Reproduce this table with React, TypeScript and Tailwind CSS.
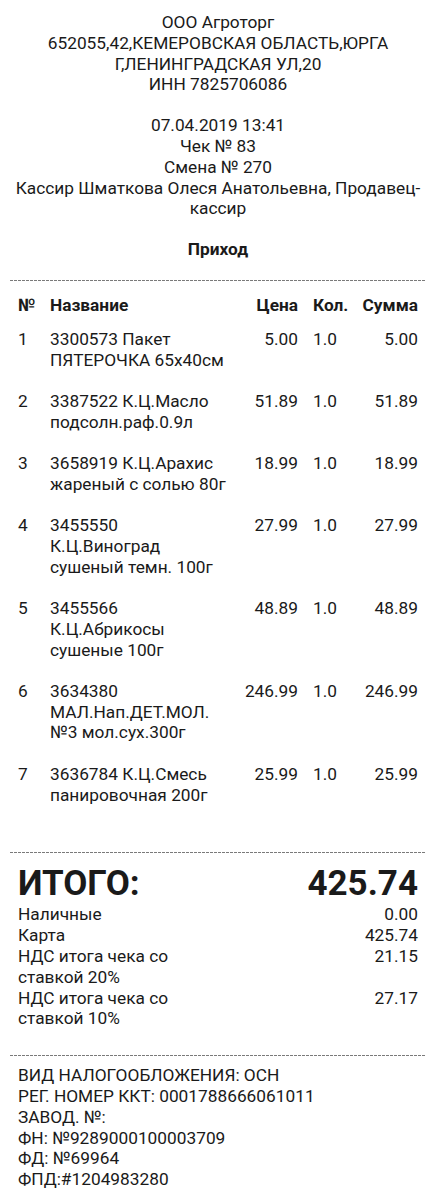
const items = [
  { n: 1, name: "3300573 Пакет ПЯТЕРОЧКА 65x40см", price: "5.00", qty: "1.0", sum: "5.00" },
  { n: 2, name: "3387522 К.Ц.Масло подсолн.раф.0.9л", price: "51.89", qty: "1.0", sum: "51.89" },
  { n: 3, name: "3658919 К.Ц.Арахис жареный с солью 80г", price: "18.99", qty: "1.0", sum: "18.99" },
  { n: 4, name: "3455550 К.Ц.Виноград сушеный темн. 100г", price: "27.99", qty: "1.0", sum: "27.99" },
  { n: 5, name: "3455566 К.Ц.Абрикосы сушеные 100г", price: "48.89", qty: "1.0", sum: "48.89" },
  { n: 6, name: "3634380 МАЛ.Нап.ДЕТ.МОЛ. №3 мол.сух.300г", price: "246.99", qty: "1.0", sum: "246.99" },
  { n: 7, name: "3636784 К.Ц.Смесь панировочная 200г", price: "25.99", qty: "1.0", sum: "25.99" },
];

const payments = [
  { label: "Наличные", value: "0.00" },
  { label: "Карта", value: "425.74" },
  { label: "НДС итога чека со ставкой 20%", value: "21.15" },
  { label: "НДС итога чека со ставкой 10%", value: "27.17" },
];

function Dashed() {
  return (
    <div className="mx-[10px] h-px bg-[repeating-linear-gradient(90deg,#7a7a7a_0px,#7a7a7a_3px,transparent_3px,transparent_4px)]" />
  );
}

export default function App() {
  return (
    <div className="w-[436px] bg-white text-[#1a1a1a] text-[17.3px] leading-[20.8px] font-['Roboto',sans-serif] pb-[20px]">
      <div className="pt-[12px] px-[6px] text-center">
        <p>ООО Агроторг</p>
        <p>652055,42,КЕМЕРОВСКАЯ ОБЛАСТЬ,ЮРГА</p>
        <p>Г,ЛЕНИНГРАДСКАЯ УЛ,20</p>
        <p>ИНН 7825706086</p>
      </div>

      <div className="mt-[20px] px-[6px] text-center">
        <p>07.04.2019 13:41</p>
        <p>Чек № 83</p>
        <p>Смена № 270</p>
        <p>Кассир Шматкова Олеся Анатольевна, Продавец-кассир</p>
      </div>

      <p className="mt-[20px] mb-[20px] text-center font-bold">Приход</p>

      <Dashed />

      <div className="px-[18px] mt-[14px]">
        <div className="flex font-bold mb-[13px]">
          <div className="w-[32px]">№</div>
          <div className="w-[176px]">Название</div>
          <div className="w-[72px] text-right">Цена</div>
          <div className="w-[60px] pl-[15px]">Кол.</div>
          <div className="flex-1 text-right">Сумма</div>
        </div>
        {items.map((it) => (
          <div key={it.n} className="flex pb-[20.5px]">
            <div className="w-[32px]">{it.n}</div>
            <div className="w-[176px]">{it.name}</div>
            <div className="w-[72px] text-right">{it.price}</div>
            <div className="w-[60px] pl-[15px]">{it.qty}</div>
            <div className="flex-1 text-right">{it.sum}</div>
          </div>
        ))}
      </div>

      <div className="mt-[26px]">
        <Dashed />
      </div>

      <div className="px-[18px] mt-[10px]">
        <div className="flex justify-between font-bold text-[35px] leading-[41.6px]">
          <span>ИТОГО:</span>
          <span>425.74</span>
        </div>
        {payments.map((p) => (
          <div key={p.label} className="flex justify-between">
            <span className="w-[190px]">{p.label}</span>
            <span>{p.value}</span>
          </div>
        ))}
      </div>

      <div className="mt-[26px]">
        <Dashed />
      </div>

      <div className="px-[18px] mt-[9px]">
        <p>ВИД НАЛОГООБЛОЖЕНИЯ: ОСН</p>
        <p>РЕГ. НОМЕР ККТ: 0001788666061011</p>
        <p>ЗАВОД. №:</p>
        <p>ФН: №9289000100003709</p>
        <p>ФД: №69964</p>
        <p>ФПД:#1204983280</p>
      </div>
    </div>
  );
}
